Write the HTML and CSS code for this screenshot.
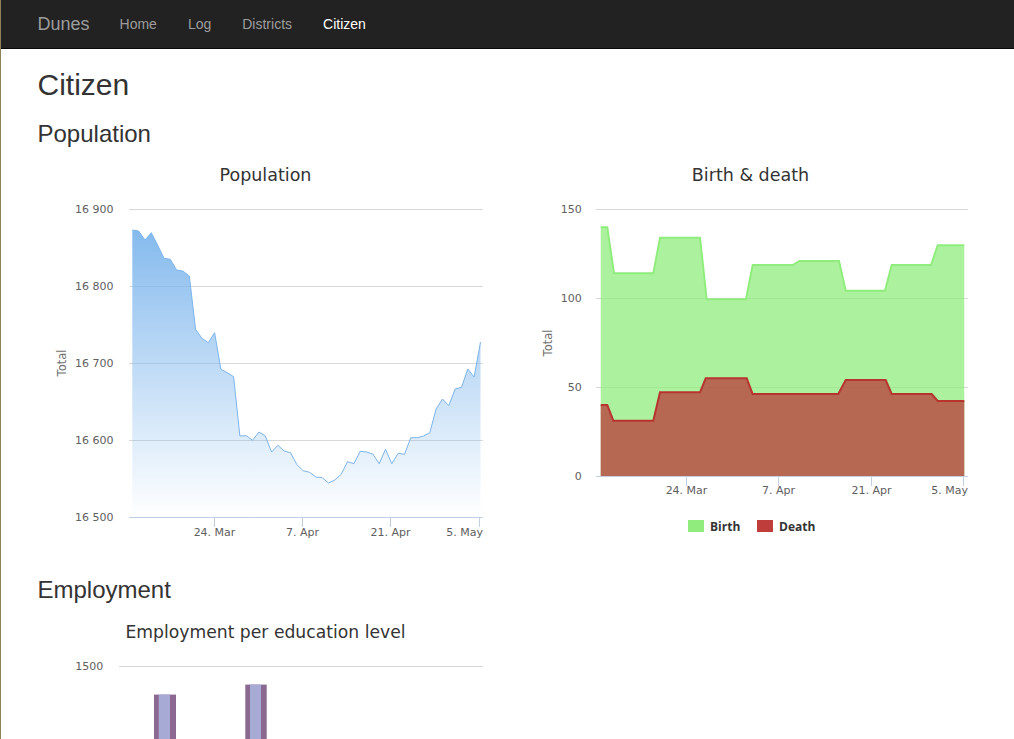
FILE: index.html
```html
<!DOCTYPE html>
<html>
<head>
<meta charset="utf-8">
<title>Dunes - Citizen</title>
<link rel="stylesheet" href="styles.css">
</head>
<body>
<nav class="navbar">
  <div class="nav-inner">
    <a class="brand" href="#">Dunes</a>
    <ul class="nav">
      <li><a href="#">Home</a></li>
      <li><a href="#">Log</a></li>
      <li><a href="#">Districts</a></li>
      <li class="active"><a href="#">Citizen</a></li>
    </ul>
  </div>
</nav>
<main class="container">
  <h1>Citizen</h1>
  <h2>Population</h2>
  <div class="row">
    <div class="col">
      <svg class="chart" width="455" height="400" viewBox="0 0 455 400">
        <defs>
          <linearGradient id="popgrad" gradientUnits="userSpaceOnUse" x1="0" y1="52" x2="0" y2="360">
            <stop offset="0" stop-color="#7cb5ec" stop-opacity="1"/>
            <stop offset="1" stop-color="#7cb5ec" stop-opacity="0"/>
          </linearGradient>
        </defs>
        <text class="ctitle" x="227.5" y="24" text-anchor="middle">Population</text>
        <g class="grid">
          <line x1="91" y1="52.5" x2="445" y2="52.5"/>
          <line x1="91" y1="129.5" x2="445" y2="129.5"/>
          <line x1="91" y1="206.5" x2="445" y2="206.5"/>
          <line x1="91" y1="283.5" x2="445" y2="283.5"/>
        </g>
        <polygon fill="url(#popgrad)" points="94.3,73 100.6,74 107,83 113.3,75.7 119.6,88 126,101.3 132.3,102.3 138.6,113 144.9,114 151.3,119 157.6,172.3 163.9,181.3 170.3,185.7 176.6,175.7 182.9,212.3 189.3,215.7 195.6,219.7 201.9,279 208.2,278.7 214.6,283.3 220.9,275 227.2,278.7 233.6,295 239.9,288.3 246.2,294 252.6,295.7 258.9,307.7 265.2,313.7 271.5,315.3 277.9,320 284.2,320.7 290.5,326 296.9,323 303.2,317.3 309.5,304.7 315.9,306.7 322.2,294.3 328.5,295 334.8,297 341.2,306.7 347.5,292.3 353.8,306.7 360.2,296.3 366.5,297.3 372.8,280.7 379.2,280.7 385.5,279 391.8,275.7 398.1,252 404.5,242 410.8,248.7 417.1,232 423.5,230.3 429.8,212 436.1,220 442.5,185 442.5,360 94.3,360"/>
        <polyline class="popline" points="94.3,73 100.6,74 107,83 113.3,75.7 119.6,88 126,101.3 132.3,102.3 138.6,113 144.9,114 151.3,119 157.6,172.3 163.9,181.3 170.3,185.7 176.6,175.7 182.9,212.3 189.3,215.7 195.6,219.7 201.9,279 208.2,278.7 214.6,283.3 220.9,275 227.2,278.7 233.6,295 239.9,288.3 246.2,294 252.6,295.7 258.9,307.7 265.2,313.7 271.5,315.3 277.9,320 284.2,320.7 290.5,326 296.9,323 303.2,317.3 309.5,304.7 315.9,306.7 322.2,294.3 328.5,295 334.8,297 341.2,306.7 347.5,292.3 353.8,306.7 360.2,296.3 366.5,297.3 372.8,280.7 379.2,280.7 385.5,279 391.8,275.7 398.1,252 404.5,242 410.8,248.7 417.1,232 423.5,230.3 429.8,212 436.1,220 442.5,185"/>
        <g class="axis">
          <line x1="91" y1="360.5" x2="445" y2="360.5"/>
          <line x1="176.5" y1="360" x2="176.5" y2="370"/>
          <line x1="264.5" y1="360" x2="264.5" y2="370"/>
          <line x1="352.5" y1="360" x2="352.5" y2="370"/>
          <line x1="441.5" y1="360" x2="441.5" y2="370"/>
        </g>
        <g class="lbl">
          <text x="75.5" y="56" text-anchor="end">16 900</text>
          <text x="75.5" y="133" text-anchor="end">16 800</text>
          <text x="75.5" y="210" text-anchor="end">16 700</text>
          <text x="75.5" y="287" text-anchor="end">16 600</text>
          <text x="75.5" y="364" text-anchor="end">16 500</text>
          <text x="176.5" y="379" text-anchor="middle">24. Mar</text>
          <text x="264.5" y="379" text-anchor="middle">7. Apr</text>
          <text x="352.5" y="379" text-anchor="middle">21. Apr</text>
          <text x="445" y="379" text-anchor="end">5. May</text>
          <text class="atitle" transform="translate(28,206) rotate(-90)" text-anchor="middle">Total</text>
        </g>
      </svg>
    </div>
    <div class="col">
      <svg class="chart" width="455" height="400" viewBox="0 0 455 400">
        <text class="ctitle" x="227.5" y="24" text-anchor="middle">Birth &amp; death</text>
        <g class="grid">
          <line x1="73" y1="52.5" x2="445" y2="52.5"/>
          <line x1="73" y1="141.5" x2="445" y2="141.5"/>
          <line x1="73" y1="230.5" x2="445" y2="230.5"/>
        </g>
        <polygon class="birth-fill" points="77.7,70.3 84.3,70.3 91,116.3 130.3,116.3 137,80.7 177,80.7 183.7,142.3 223,142.3 229.7,108 269.7,108 276.3,104 316,104 322.7,133.7 362,133.7 368.7,108 408,108 414.7,88.3 441.3,88.3 441.3,319 77.7,319"/>
        <polygon class="death-fill" points="77.7,248 84.3,248 90.3,263.7 130.3,263.7 137,235.3 177,235.3 182.7,221.3 223.7,221.3 229.7,237 315.3,237 322.7,223 362.7,223 368.7,237 408.7,237 414.7,244 441.3,244 441.3,319 77.7,319"/>
        <polyline class="birth-line" points="77.7,70.3 84.3,70.3 91,116.3 130.3,116.3 137,80.7 177,80.7 183.7,142.3 223,142.3 229.7,108 269.7,108 276.3,104 316,104 322.7,133.7 362,133.7 368.7,108 408,108 414.7,88.3 441.3,88.3"/>
        <polyline class="death-line" points="77.7,248 84.3,248 90.3,263.7 130.3,263.7 137,235.3 177,235.3 182.7,221.3 223.7,221.3 229.7,237 315.3,237 322.7,223 362.7,223 368.7,237 408.7,237 414.7,244 441.3,244"/>
        <g class="axis">
          <line x1="73" y1="319.5" x2="445" y2="319.5"/>
          <line x1="163.5" y1="319" x2="163.5" y2="329"/>
          <line x1="255.5" y1="319" x2="255.5" y2="329"/>
          <line x1="348.5" y1="319" x2="348.5" y2="329"/>
          <line x1="440.5" y1="319" x2="440.5" y2="329"/>
        </g>
        <g class="lbl">
          <text x="58.7" y="56" text-anchor="end">150</text>
          <text x="58.7" y="145" text-anchor="end">100</text>
          <text x="58.7" y="234" text-anchor="end">50</text>
          <text x="58.7" y="323" text-anchor="end">0</text>
          <text x="163.5" y="337" text-anchor="middle">24. Mar</text>
          <text x="255.5" y="337" text-anchor="middle">7. Apr</text>
          <text x="348.5" y="337" text-anchor="middle">21. Apr</text>
          <text x="445" y="337" text-anchor="end">5. May</text>
          <text class="atitle" transform="translate(29,186) rotate(-90)" text-anchor="middle">Total</text>
        </g>
        <g class="legend">
          <rect x="165" y="363" width="16" height="12" fill="#90ed7d"/>
          <text x="187" y="373.5">Birth</text>
          <rect x="234" y="363" width="16" height="12" fill="#bf3d3b"/>
          <text x="256" y="373.5">Death</text>
        </g>
      </svg>
    </div>
  </div>
  <h2>Employment</h2>
  <div class="row">
    <div class="col">
      <svg class="chart" width="455" height="400" viewBox="0 0 455 400">
        <text class="ctitle ctitle-long" x="227.5" y="24" text-anchor="middle">Employment per education level</text>
        <g class="grid">
          <line x1="81" y1="52.5" x2="445" y2="52.5"/>
        </g>
        <g class="lbl">
          <text x="65.3" y="56" text-anchor="end">1500</text>
        </g>
        <rect class="bar-outer" x="116" y="80.6" width="22" height="320"/>
        <rect class="bar-inner" x="120.7" y="80.6" width="11.3" height="320"/>
        <rect class="bar-outer" x="207.3" y="70.6" width="21.4" height="330"/>
        <rect class="bar-inner" x="212" y="70.6" width="11" height="330"/>
      </svg>
    </div>
  </div>
</main>
</body>
</html>
```
FILE: styles.css
```css
html, body {
  margin: 0;
  padding: 0;
}
body {
  background: #fff;
  color: #333;
  font-family: "Liberation Sans", Arial, sans-serif;
  font-size: 14px;
  border-left: 1px solid #8f8157;
  min-height: 739px;
}
.navbar {
  background: #222;
  border-bottom: 1px solid #080808;
  height: 48px;
}
.nav-inner {
  width: 970px;
  box-sizing: border-box;
  padding: 0 15px;
  margin: 0 auto;
  display: flex;
  align-items: center;
  height: 48px;
}
.brand {
  color: #9d9d9d;
  font-size: 18px;
  text-decoration: none;
  padding-right: 15px;
  line-height: 20px;
  margin-top: -1px;
}
.nav {
  list-style: none;
  margin: 0;
  padding: 0;
  display: flex;
}
.nav a {
  display: block;
  color: #9d9d9d;
  text-decoration: none;
  padding: 0 15.5px;
  line-height: 20px;
  font-size: 14px;
}
.nav li:first-child a {
  padding-left: 15px;
}
.nav .active a {
  color: #fff;
}
.container {
  width: 970px;
  box-sizing: border-box;
  padding: 0 15px;
  margin: 0 auto;
}
h1, h2 {
  font-family: "Liberation Sans", Arial, sans-serif;
  font-weight: 500;
  line-height: 1.1;
  color: #333;
}
h1 {
  font-size: 30px;
  margin: 19px 0 10px;
}
h2 {
  font-size: 24px;
  margin: 20px 0 10px;
}
.row {
  display: flex;
  gap: 30px;
}
.col {
  width: 455px;
  flex: none;
}
.chart {
  display: block;
}
.chart text {
  font-family: "DejaVu Sans", Verdana, sans-serif;
}
.ctitle {
  font-size: 17.5px;
  fill: #333;
}
.ctitle-long {
  font-size: 17.2px;
}
.lbl text {
  font-size: 11px;
  fill: #606060;
}
.lbl .atitle {
  font-size: 11.5px;
  fill: #707070;
}
.grid line {
  stroke: #d8d8d8;
  stroke-width: 1;
}
.axis line {
  stroke: #c0d0e0;
  stroke-width: 1;
}
.popline {
  fill: none;
  stroke: #7cb5ec;
  stroke-width: 1;
}
.birth-fill {
  fill: #90ed7d;
  fill-opacity: 0.75;
}
.death-fill {
  fill: #b9393a;
  fill-opacity: 0.75;
}
.birth-line {
  fill: none;
  stroke: #90ed7d;
  stroke-width: 2;
}
.death-line {
  fill: none;
  stroke: #b8342f;
  stroke-width: 2;
}
.legend text {
  font-family: "Open Sans", "DejaVu Sans", sans-serif;
  font-weight: 700;
  font-size: 12px;
  fill: #333;
}
.bar-outer {
  fill: #8b6890;
}
.bar-inner {
  fill: #a8aad6;
}
```
